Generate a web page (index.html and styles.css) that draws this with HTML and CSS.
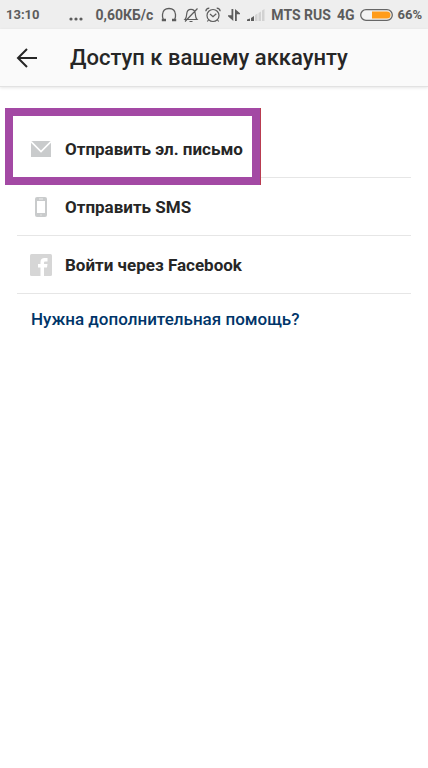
FILE: index.html
```html
<!DOCTYPE html>
<html lang="ru">
<head>
  <meta charset="UTF-8">
  <meta name="viewport" content="width=device-width, initial-scale=1.0">
  <title>Доступ к вашему аккаунту</title>
  <link rel="stylesheet" href="styles.css">
</head>
<body>
  <div class="status-bar">
    <span class="time">13:10</span>
    <div class="status-right">
      <svg class="dots" width="14" height="16" viewBox="0 0 14 16" fill="#5c5c5c">
        <circle cx="2" cy="12" r="1.6"/><circle cx="7" cy="12" r="1.6"/><circle cx="12" cy="12" r="1.6"/>
      </svg>
      <span class="speed">0,60КБ/с</span>
      <div class="status-icons">
        <svg width="16" height="16" viewBox="0 0 16 16" fill="none" stroke="#5c5c5c" stroke-width="1.3">
          <path d="M4.500 13.300H2.500C1.500 11 1.300 9 1.500 7.500C1.800 3.800 4.500 1.500 8 1.500S14.200 3.800 14.500 7.500C14.700 9 14.500 11 13.500 13.300H11.500"/>
          <path d="M0.800 13H5M11 13H15.200" stroke-width="2.400"/>
        </svg>
        <svg width="16" height="16" viewBox="0 0 16 16" fill="none" stroke="#5c5c5c" stroke-width="1.2">
          <path d="M2 12.500C3.500 11 3.500 9.500 3.700 7C3.900 4 5.500 2.300 8 2.300S12.100 4 12.300 7C12.500 9.500 12.500 11 14 12.500ZM6.500 14.500H9.500M2 14.500L14.500 1.500"/>
        </svg>
        <svg width="16" height="16" viewBox="0 0 16 16" fill="none" stroke="#5c5c5c" stroke-width="1.2">
          <circle cx="8" cy="8.500" r="6"/>
          <path d="M5 7L8 9.700L11.300 6.700M0.800 4.300C1 2.500 2.300 1.300 4.300 1.200M15.200 4.300C15 2.500 13.700 1.300 11.700 1.200M3.500 13L2.300 14.500M12.500 13L13.700 14.500"/>
        </svg>
        <svg width="14" height="16" viewBox="0 0 14 16" fill="#5c5c5c">
          <path d="M4.500 2H6.300V14L1 9.300V8.300H4.500ZM8 14H9.800V7.300H13V6.300L8 2Z"/>
        </svg>
        <svg width="18" height="16" viewBox="0 0 18 16">
          <path d="M0 14V12.500L3 11.500V14ZM4 14V11L7 9V14Z" fill="#5c5c5c"/>
          <path d="M8 8L10.500 6.500V14H8ZM11.500 6L14 4.500V14H11.500ZM15 3.500L17.500 2V14H15Z" fill="#d2d2d2"/>
        </svg>
      </div>
      <span class="carrier">MTS RUS</span>
      <span class="network">4G</span>
      <svg class="battery" width="33" height="12" viewBox="0 0 33 12">
        <rect x="0.700" y="0.700" width="31.600" height="10.600" rx="5.300" fill="#f4f4f4" stroke="#666" stroke-width="1.300"/>
        <path d="M12 2.500H27A3.500 3.500 0 0 1 27 9.500H12Z" fill="#ff9c1b"/>
      </svg>
      <span class="percent">66%</span>
    </div>
  </div>

  <header class="app-bar">
    <button class="back" type="button" aria-label="Назад">
      <svg width="22" height="22" viewBox="0 0 22 22" fill="none" stroke="#262626" stroke-width="2">
        <path d="M11 2L2 11L11 20M2 11H21"/>
      </svg>
    </button>
    <h1>Доступ к вашему аккаунту</h1>
  </header>

  <main class="content">
    <ul class="options">
      <li class="option selected">
        <a href="#email">
          <span class="icon">
            <svg width="20" height="16" viewBox="0 0 20 16">
              <path d="M0 0H20V16H0Z" fill="#c9cbcc"/>
              <path d="M0 0.500L10 10.500L20 0.500" fill="none" stroke="#fff" stroke-width="1.600"/>
            </svg>
          </span>
          Отправить эл. письмо
        </a>
      </li>
      <li class="option">
        <a href="#sms">
          <span class="icon">
            <svg width="12" height="20" viewBox="0 0 12 20">
              <rect width="12" height="20" rx="2" fill="#c9cbcc"/>
              <path d="M2 4H10V16H2Z" fill="#fff"/>
              <path d="M4 2H8" stroke="#eee"/>
              <circle cx="6" cy="18" r="0.800" fill="#e4e4e4"/>
            </svg>
          </span>
          Отправить SMS
        </a>
      </li>
      <li class="option">
        <a href="#facebook">
          <span class="icon">
            <svg width="22" height="22" viewBox="0 0 22 22">
              <rect width="22" height="22" rx="1.500" fill="#d6d6d6"/>
              <path d="M10.500 22V13.500H8V10H10.500V8C10.500 5.500 12 4 14.500 4H17.500V7.500H15.500C14.500 7.500 14 8 14 8.800V10H17.500L17 13.500H14V22Z" fill="#fff"/>
            </svg>
          </span>
          Войти через Facebook
        </a>
      </li>
    </ul>
    <a class="help" href="#help">Нужна дополнительная помощь?</a>
  </main>
</body>
</html>
```
FILE: styles.css
```css
*,
*::after {
  box-sizing: border-box;
}

body {
  margin: 0;
  font-family: Roboto, "Noto Sans", sans-serif;
  background-color: #fff;
  color: #262626;
}

svg {
  display: block;
}

.status-bar {
  display: flex;
  align-items: center;
  justify-content: space-between;
  height: 29px;
  padding: 0 6px;
  background-color: #eee;
  color: #5c5c5c;
  font-size: 14px;
  font-weight: 700;
  white-space: nowrap;
}

.time,
.percent {
  font-size: 13px;
}

.status-right {
  display: flex;
  align-items: center;
}

.dots {
  margin-right: 12px;
}

.speed {
  margin-right: 8px;
}

.status-icons {
  display: flex;
  gap: 6px;
  margin-right: 6px;
}

.carrier,
.network {
  margin-right: 6px;
}

.battery {
  margin-right: 4px;
}

.app-bar {
  display: flex;
  align-items: center;
  height: 58px;
  padding: 0 16px;
  background-color: #fafafa;
  border-bottom: 1px solid #e2e2e2;
  box-shadow: 0 1px 3px rgba(0, 0, 0, 0.1);
}

.back {
  padding: 0;
  border: none;
  background: none;
  cursor: pointer;
}

.app-bar h1 {
  margin: 0 0 0 32px;
  font-size: 22px;
  font-weight: 500;
}

.content {
  padding: 33px 17px;
}

.options {
  margin: 0 0 15px;
  padding: 0;
  list-style: none;
}

.option {
  position: relative;
  border-bottom: 1px solid #e6e6e6;
}

.option a {
  display: flex;
  align-items: center;
  height: 57px;
  padding-left: 12px;
  color: #262626;
  font-size: 17px;
  font-weight: 700;
  text-decoration: none;
}

.icon {
  display: flex;
  justify-content: center;
  width: 24px;
  margin-right: 12px;
}

/* highlight frame around the chosen option */
.selected::after {
  content: "";
  position: absolute;
  top: -12px;
  left: -12px;
  width: 255px;
  height: 77px;
  border: 8px solid #a349a4;
  box-shadow: 1px 0 0 #b93c50;
  pointer-events: none;
}

.help {
  display: inline-block;
  margin-left: 14px;
  color: #003569;
  font-size: 17px;
  font-weight: 500;
  line-height: 20px;
  text-decoration: none;
}
```
